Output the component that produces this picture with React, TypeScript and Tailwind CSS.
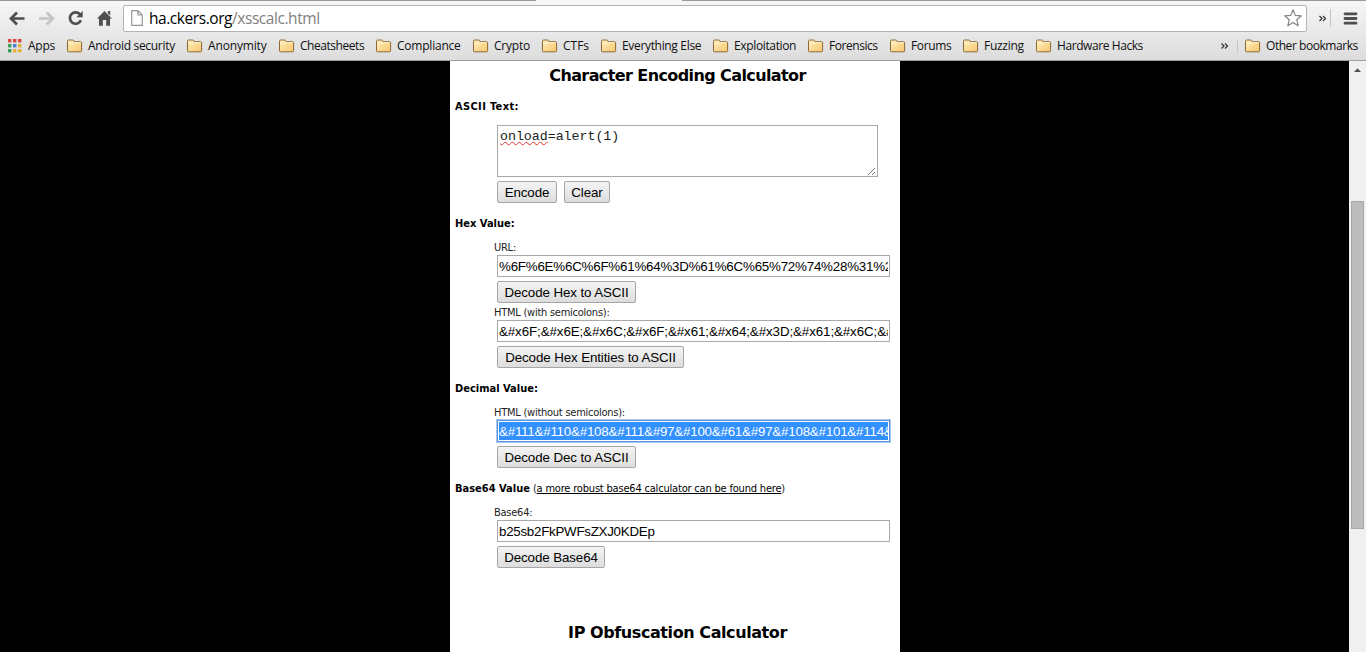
import React from "react";

const bookmarks = [
  { name: "Android security", width: "w-[120px]", track: "tracking-[-0.3px]" },
  { name: "Anonymity", width: "w-[92px]", track: "tracking-[-0.16px]" },
  { name: "Cheatsheets", width: "w-[97px]", track: "tracking-[-0.45px]" },
  { name: "Compliance", width: "w-[97px]", track: "tracking-[-0.22px]" },
  { name: "Crypto", width: "w-[69px]", track: "tracking-[-0.2px]" },
  { name: "CTFs", width: "w-[59px]", track: "tracking-[0px]" },
  { name: "Everything Else", width: "w-[112px]", track: "tracking-[-0.33px]" },
  { name: "Exploitation", width: "w-[95px]", track: "tracking-[-0.36px]" },
  { name: "Forensics", width: "w-[82px]", track: "tracking-[-0.45px]" },
  { name: "Forums", width: "w-[73px]", track: "tracking-[-0.36px]" },
  { name: "Fuzzing", width: "w-[73px]", track: "tracking-[-0.27px]" },
  { name: "Hardware Hacks", width: "w-[120px]", track: "tracking-[-0.42px]" },
];

const appColors = ["#d8473d", "#d8473d", "#d8473d", "#3b9b5b", "#4a7fd6", "#e8b23a", "#3b9b5b", "#e8b23a", "#e8b23a"];

function AppsIcon() {
  return (
    <svg width="14" height="14" viewBox="0 0 14 14" className="shrink-0">
      {appColors.map((c, i) => (
        <rect key={i} x={(i % 3) * 5} y={Math.floor(i / 3) * 5} width="3.4" height="3.4" fill={c} />
      ))}
    </svg>
  );
}

function Folder() {
  return (
    <svg width="16" height="14" viewBox="0 0 16 14" className="shrink-0">
      <defs>
        <linearGradient id="folder" x1="0" y1="0" x2="1" y2="1">
          <stop offset="0" stopColor="#fff0bd" />
          <stop offset="1" stopColor="#f8c56b" />
        </linearGradient>
      </defs>
      <path
        d="M0.5 11.8V2.2Q0.5 1 1.7 1H5.6Q6.6 1 6.9 1.9L7.2 2.7H13.6Q14.6 2.7 14.6 3.7V11.8Q14.6 12.8 13.6 12.8H1.5Q0.5 12.8 0.5 11.8Z"
        fill="url(#folder)"
        stroke="#8a6a3c"
      />
      <path d="M1.5 4.5H6.3L7.6 3.6H13.7" fill="none" stroke="#fff6d6" strokeWidth="0.9" />
    </svg>
  );
}

function Toolbar() {
  return (
    <div className="flex h-[26px] items-center">
      <svg width="123" height="26" viewBox="0 0 123 26" className="shrink-0">
        <g fill="none" strokeWidth="2.7">
          <path d="M24.5 13.5H11.5M17 7.5L11 13.5L17 19.5" stroke="#4f4f4f" />
          <path d="M39 13.5H52M46.8 7.5L52.8 13.5L46.8 19.5" stroke="#c4c4c4" />
          <path d="M80.2 9.6A5.7 5.7 0 1 0 80.9 15.2" stroke="#4f4f4f" />
        </g>
        <path d="M82.7 6V12.3H76.4Z" fill="#4f4f4f" />
        <path d="M104.5 6L112 13.6H110V20.8H106.2V15H102.8V20.8H99V13.6H97Z" fill="#4f4f4f" />
        <path d="M107.8 6H110.2V10.6L107.8 8.2Z" fill="#4f4f4f" />
      </svg>
      <div className="flex h-[27px] w-[1184px] shrink-0 items-center rounded-[2px] border border-[#b3b3b3] bg-white">
        <svg width="12" height="16" viewBox="0 0 12 16" className="ml-[7px] shrink-0">
          <path d="M0.7 0.7H7L11.3 5V15.3H0.7Z M7 0.7V5H11.3" fill="#fdfdfd" stroke="#979797" strokeWidth="1.2" />
        </svg>
        <span className="ml-[6px] whitespace-pre text-[15.5px] leading-[24px] tracking-[-0.44px] text-black">
          ha.ckers.org<span className="text-[#808080]">/xsscalc.html</span>
        </span>
        <svg width="20" height="20" viewBox="0 0 20 20" className="ml-auto mr-[3px] shrink-0">
          <path
            d="M10 1.7L12.3 7.4L18.4 7.8L13.7 11.7L15.2 17.7L10 14.4L4.8 17.7L6.3 11.7L1.6 7.8L7.7 7.4Z"
            fill="#fff"
            stroke="#858585"
            strokeWidth="1.2"
            strokeLinejoin="round"
          />
        </svg>
      </div>
      <svg width="59" height="26" viewBox="0 0 59 26" className="shrink-0">
        <path d="M12.5 11L15 13.5L12.5 16M16 11L18.5 13.5L16 16" fill="none" stroke="#333" strokeWidth="1.2" />
        <path d="M23.5 4V22" stroke="#c2c2c2" />
        <path d="M38 8.8H49M38 13.5H49M38 18.2H49" stroke="#4f4f4f" strokeWidth="2.8" strokeLinecap="round" />
      </svg>
    </div>
  );
}

function BookmarkBar() {
  return (
    <div className="mt-px flex h-[28px] items-center pl-[8px] text-[12px] text-[#111]">
      <div className="flex w-[59px] shrink-0 items-center gap-[6px]">
        <AppsIcon />
        <span className="tracking-[-0.27px]">Apps</span>
      </div>
      {bookmarks.map((b) => (
        <div key={b.name} className={`flex shrink-0 items-center gap-[5px] whitespace-nowrap ${b.width}`}>
          <Folder />
          <span className={b.track}>{b.name}</span>
        </div>
      ))}
      <svg width="24" height="20" viewBox="0 0 24 20" className="ml-auto shrink-0">
        <path d="M0.5 7.5L3 10L0.5 12.5M4 7.5L6.5 10L4 12.5" fill="none" stroke="#333" strokeWidth="1.2" />
        <path d="M16.5 3V17" stroke="#c6c6c6" />
      </svg>
      <div className="flex w-[121px] shrink-0 items-center gap-[5px] whitespace-nowrap">
        <Folder />
        <span className="tracking-[-0.45px]">Other bookmarks</span>
      </div>
    </div>
  );
}

function Heading({ children, track }: { children: React.ReactNode; track: string }) {
  return (
    <h2
      className={`flex h-[28px] items-center justify-center pt-px pl-[5px] font-['DejaVu_Sans',sans-serif] text-[16px] font-bold ${track}`}
    >
      {children}
    </h2>
  );
}

function Section({ children }: { children: React.ReactNode }) {
  return <div className="flex h-[39px] items-center pt-[3px] pl-[5px] text-[11px] font-bold">{children}</div>;
}

function Caption({ children, tall = false }: { children: React.ReactNode; tall?: boolean }) {
  return (
    <div className={`flex items-center pl-[44px] text-[11px] tracking-[-0.25px] text-[#222] ${tall ? "h-[17px] pt-[3px]" : "h-[13px]"}`}>
      {children}
    </div>
  );
}

function Field({
  value,
  selected = false,
  track = "tracking-[-0.21px]",
}: {
  value: string;
  selected?: boolean;
  track?: string;
}) {
  return (
    <div
      className={`ml-[47px] h-[22px] w-[393px] border p-px ${
        selected ? "border-[#5b92de] shadow-[0_0_0_1px_#a9c6f0]" : "border-[#a9a9a9]"
      }`}
    >
      <input
        readOnly
        value={value}
        className={`block h-[18px] w-full pt-px font-['Liberation_Sans',Arial,sans-serif] text-[13.333px] outline-none ${track} ${
          selected ? "bg-[#3390ff] text-white" : "bg-white text-black"
        }`}
      />
    </div>
  );
}

function Button({ children, width }: { children: React.ReactNode; width: string }) {
  return (
    <button
      className={`flex h-[22px] items-center justify-center whitespace-nowrap rounded-[2px] border border-[#a6a6a6] bg-linear-to-b from-[#f4f4f4] to-[#dddddd] pt-px font-['Liberation_Sans',Arial,sans-serif] text-[13.333px] tracking-[-0.1px] text-black ${width}`}
    >
      {children}
    </button>
  );
}

function Actions({ children }: { children: React.ReactNode }) {
  return <div className="mt-1 ml-[47px] flex gap-[7px]">{children}</div>;
}

function Scrollbar() {
  return (
    <div className="flex w-[17px] shrink-0 flex-col items-center bg-[#f0f0f0]">
      <svg width="17" height="17" viewBox="0 0 17 17">
        <path d="M5 11L8.5 7.3L12 11Z" fill="#505050" />
      </svg>
      <div className="mt-[123px] h-[328px] w-[13px] border border-[#a8a8a8] bg-[#bcbcbc]" />
    </div>
  );
}

export default function App() {
  return (
    <div className="flex h-[652px] w-[1366px] flex-col overflow-hidden bg-black">
      <header className="h-[61px] shrink-0 border-b border-[#a0a0a0] bg-linear-to-b from-[#f7f7f7] to-[#dcdcdc] font-['Open_Sans','Noto_Sans',sans-serif]">
        <div className="flex h-px">
          <div className="w-[536px] bg-[#989898]" />
          <div className="w-[146px]" />
          <div className="flex-1 bg-[#989898]" />
        </div>
        <div className="mt-[4px]">
          <Toolbar />
        </div>
        <BookmarkBar />
      </header>
      <div className="flex min-h-0 flex-1">
        <div className="flex min-w-0 flex-1 pl-[450px]">
          <main className="w-[450px] overflow-hidden bg-white font-['DejaVu_Sans_Condensed','DejaVu_Sans',sans-serif] text-black">
            <Heading track="tracking-[-0.6px]">Character Encoding Calculator</Heading>
            <div className="-mt-[3px]">
              <Section>
                <span className="tracking-[0.35px]">ASCII Text:</span>
              </Section>
            </div>
            <div className="ml-[47px] flex h-[52px] w-[381px] items-end justify-between border border-[#a9a9a9] bg-white">
              <div className="self-start pt-[3px] pl-[2px] font-['Liberation_Mono',monospace] text-[13.333px] leading-[15px] tracking-[-0.05px] text-[#222]">
                <span className="underline decoration-[#e03030] decoration-wavy decoration-[1px] underline-offset-[1px]">onload</span>=alert(1)
              </div>
              <svg width="10" height="10" viewBox="0 0 10 10" className="shrink-0">
                <path d="M1 9L8 2M5 9L8 6" stroke="#777" strokeWidth="1" />
              </svg>
            </div>
            <Actions>
              <Button width="w-[60px]">Encode</Button>
              <Button width="w-[46px]">Clear</Button>
            </Actions>

            <Section>Hex Value:</Section>
            <Caption>URL:</Caption>
            <Field value={"%6F%6E%6C%6F%61%64%3D%61%6C%65%72%74%28%31%29"} />
            <Actions>
              <Button width="w-[139px]">Decode Hex to ASCII</Button>
            </Actions>
            <Caption tall>HTML (with semicolons):</Caption>
            <Field
              track="tracking-[-0.09px]"
              value={"&#x6F;&#x6E;&#x6C;&#x6F;&#x61;&#x64;&#x3D;&#x61;&#x6C;&#x65;&#x72;&#x74;&#x28;&#x31;&#x29;"}
            />
            <Actions>
              <Button width="w-[187px]">Decode Hex Entities to ASCII</Button>
            </Actions>

            <Section>Decimal Value:</Section>
            <Caption>HTML (without semicolons):</Caption>
            <Field selected value={"&#111&#110&#108&#111&#97&#100&#61&#97&#108&#101&#114&#116&#40&#49&#41"} />
            <Actions>
              <Button width="w-[139px]">Decode Dec to ASCII</Button>
            </Actions>

            <Section>
              Base64 Value
              <span className="ml-[3px] font-normal tracking-[-0.19px] text-[#222]">
                (<a className="text-black underline">a more robust base64 calculator can be found here</a>)
              </span>
            </Section>
            <Caption>Base64:</Caption>
            <Field value="b25sb2FkPWFsZXJ0KDEp" track="tracking-[-0.26px]" />
            <Actions>
              <Button width="w-[108px]">Decode Base64</Button>
            </Actions>
            <div className="mt-[50px]">
              <Heading track="tracking-[-0.42px]">IP Obfuscation Calculator</Heading>
            </div>
          </main>
        </div>
        <Scrollbar />
      </div>
    </div>
  );
}
